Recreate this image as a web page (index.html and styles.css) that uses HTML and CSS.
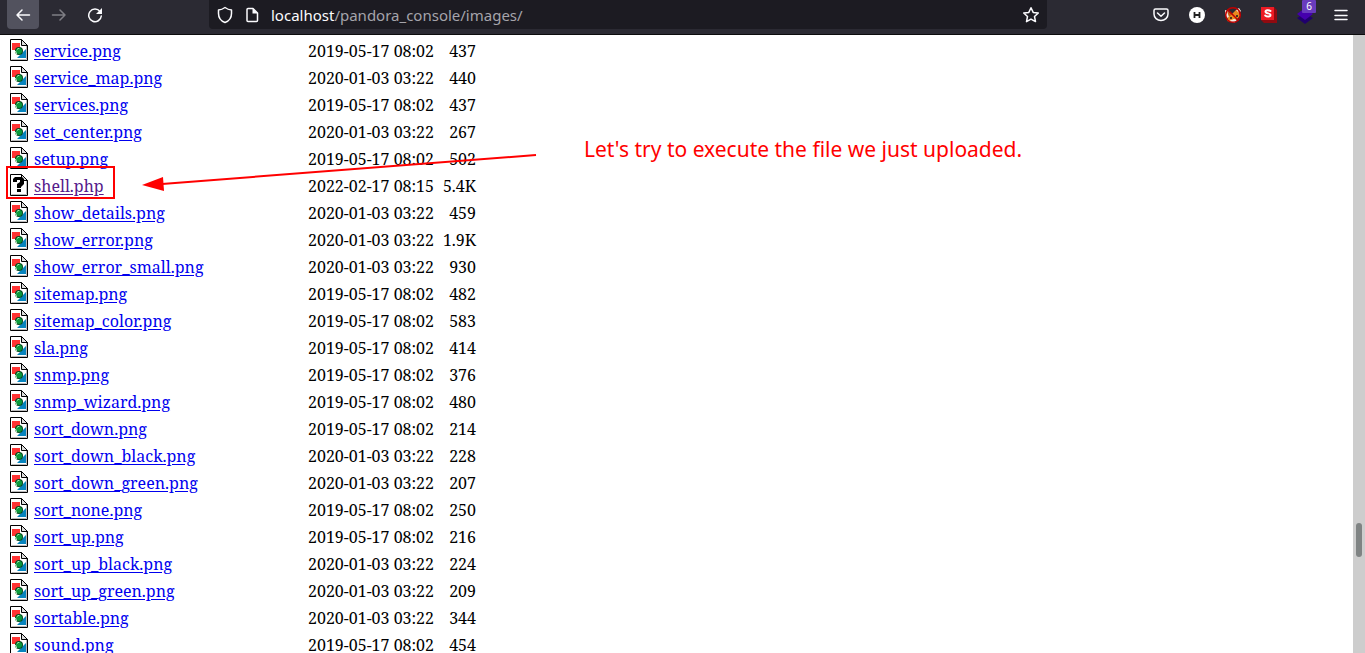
FILE: index.html
```
<!DOCTYPE html>
<html lang="en">
<head>
<meta charset="utf-8">
<title>Index of /pandora_console/images</title>
<link rel="stylesheet" href="styles.css">
</head>
<body>
<svg class="sprite" aria-hidden="true">
  <symbol id="image" viewBox="0 0 18 22">
    <path d="M.5.5h11l6 6v15H.5z" fill="#fff" stroke="#000"/>
    <path d="M1.500 20.500h15V7" fill="none" stroke="#bbb"/>
    <path d="M11.500.5v6h6z" fill="#ddd" stroke="#000"/>
    <path d="M2 4h8v7H2z" fill="#f33"/>
    <path d="M16 10v9H7z" fill="#0784bd"/>
    <circle cx="9" cy="12" r="4" fill="#05471c"/>
    <circle cx="9" cy="12" r="3" fill="#0a9a3c"/>
    <path d="M5 12h1l2-3h2L8 10l-2 2 1 3H6z" fill="#dfd"/>
  </symbol>
  <symbol id="unknown" viewBox="0 0 18 22">
    <path d="M.5.5h11l6 6v15H.5z" fill="#fff" stroke="#000"/>
    <path d="M1.500 20.500h15V7" fill="none" stroke="#bbb"/>
    <path d="M11.500.5v6h6z" fill="#ddd" stroke="#000"/>
    <path d="M3 8V5l2-2h7l2 2v5l-3 3v1H7v-4l3-2V6H7v2zM7 15h4v3H7z" fill="#000"/>
  </symbol>
</svg>
<header class="toolbar">
  <nav class="nav">
    <button class="tool active" aria-label="Back"><svg width="16" height="16" viewBox="0 0 16 16"><path d="M14.500 8H2M7 3L2 8l5 5"/></svg></button>
    <button class="tool dim" aria-label="Forward"><svg width="16" height="16" viewBox="0 0 16 16"><path d="M1.500 8H14M9 3l5 5-5 5"/></svg></button>
    <button class="tool" aria-label="Reload"><svg width="16" height="16" viewBox="0 0 16 16"><path d="M13 4.500A6.300 6.300 0 1 0 14.300 9"/><path d="M15 1v6H9z" fill="#fbfbfe" stroke="none"/></svg></button>
  </nav>
  <div class="address">
    <svg width="16" height="18" viewBox="0 0 16 18"><path d="M8 1.500c2 1.500 4 2.300 6.500 2.500v3.500c0 4-2.500 7.500-6.500 9-4-1.500-6.500-5-6.500-9V4C4 3.800 6 3 8 1.500z"/></svg>
    <svg width="16" height="16" viewBox="0 0 16 16"><path d="M4 1.500h5L13.500 6v7.500a1 1 0 0 1-1 1H4a1 1 0 0 1-1-1v-11a1 1 0 0 1 1-1z"/><path d="M8.500 1v5.500H14z" fill="#fbfbfe" stroke="none"/></svg>
    <div class="url"><span class="host">localhost</span>/pandora_console/images/</div>
    <button class="star" aria-label="Bookmark"><svg width="18" height="18" viewBox="0 0 18 18"><path d="M9 1.700l2.200 4.700 5.100.6-3.800 3.500 1 5.100L9 13.100l-4.500 2.500 1-5.100L1.700 7l5.100-.6z"/></svg></button>
  </div>
  <div class="extensions">
    <button class="ext" aria-label="Pocket"><svg width="18" height="18" viewBox="0 0 18 18"><path d="M3.500 3h11A1.500 1.500 0 0 1 16 4.500V8a7 6.500 0 0 1-14 0V4.500A1.500 1.500 0 0 1 3.500 3zM5.500 7L9 10.200 12.500 7"/></svg></button>
    <button class="ext" aria-label="H extension"><svg width="18" height="18" viewBox="0 0 18 18"><circle cx="9" cy="9" r="8" fill="#fff" stroke="none"/><path d="M6.500 6v6M11.500 6v6M6.500 9h5" stroke="#222" stroke-width="1.800" stroke-linecap="butt"/></svg></button>
    <button class="ext" aria-label="Proxy"><svg width="18" height="18" viewBox="0 0 18 18"><g stroke="none"><path d="M4 10l4-2 4-4 3 1 1 5-3 3-5 3-5-1z" fill="#ea8a1f"/><path d="M1 4l3 1 2 5-3 2-2-3zM12 4l3-2 2 3-2 2zM5 15l5-2 3 1-3 3z" fill="#f5ece2"/><path d="M3 5l5 3-3 3zM14 6l2-2v4z" fill="#c45a10"/><path d="M6 11h2v2H6zM12 9h2v2h-2z" fill="#432"/></g><circle cx="9" cy="9" r="7.300" stroke="#c00000"/><path d="M4 4l10 10" stroke="#c00000"/></svg></button>
    <button class="ext" aria-label="S extension"><svg width="18" height="18" viewBox="0 0 18 18"><g stroke="none"><path d="M1 14l3 3h13V4l-3-3v13z" fill="#900a10"/><path d="M1 1h13v13H1z" fill="#ed1b24"/></g><path d="M10.500 5c-1.500-1.200-5-1.200-5 .5 0 2.500 5 1.300 5 3.500 0 2-3.500 2-5.300.5" stroke="#fff" stroke-width="2"/></svg></button>
    <button class="ext" aria-label="Layers, 6"><svg width="18" height="18" viewBox="0 0 18 18"><g stroke="none"><path d="M1 12l8-5 8 5-8 6z" fill="#20006d"/><path d="M1 8l8-6 8 6-8 6z" fill="#4500ad"/></g></svg><span class="badge">6</span></button>
    <button class="ext" aria-label="Menu"><svg width="18" height="18" viewBox="0 0 18 18"><path d="M3 4.500h12M3 9.500h12M3 13.500h12"/></svg></button>
  </div>
</header>
<main class="page">
  <div class="listing">
    <table class="files">
      <tbody>
        <tr><td class="icon"><svg><use href="#image"/></svg></td><td class="name"><a href="#">service.png</a></td><td class="date">2019-05-17 08:02</td><td class="size">437</td></tr>
        <tr><td class="icon"><svg><use href="#image"/></svg></td><td class="name"><a href="#">service_map.png</a></td><td class="date">2020-01-03 03:22</td><td class="size">440</td></tr>
        <tr><td class="icon"><svg><use href="#image"/></svg></td><td class="name"><a href="#">services.png</a></td><td class="date">2019-05-17 08:02</td><td class="size">437</td></tr>
        <tr><td class="icon"><svg><use href="#image"/></svg></td><td class="name"><a href="#">set_center.png</a></td><td class="date">2020-01-03 03:22</td><td class="size">267</td></tr>
        <tr><td class="icon"><svg><use href="#image"/></svg></td><td class="name"><a href="#">setup.png</a></td><td class="date">2019-05-17 08:02</td><td class="size">502</td></tr>
        <tr><td class="icon"><svg><use href="#unknown"/></svg></td><td class="name"><a class="visited" href="#">shell.php</a></td><td class="date">2022-02-17 08:15</td><td class="size">5.4K</td></tr>
        <tr><td class="icon"><svg><use href="#image"/></svg></td><td class="name"><a href="#">show_details.png</a></td><td class="date">2020-01-03 03:22</td><td class="size">459</td></tr>
        <tr><td class="icon"><svg><use href="#image"/></svg></td><td class="name"><a href="#">show_error.png</a></td><td class="date">2020-01-03 03:22</td><td class="size">1.9K</td></tr>
        <tr><td class="icon"><svg><use href="#image"/></svg></td><td class="name"><a href="#">show_error_small.png</a></td><td class="date">2020-01-03 03:22</td><td class="size">930</td></tr>
        <tr><td class="icon"><svg><use href="#image"/></svg></td><td class="name"><a href="#">sitemap.png</a></td><td class="date">2019-05-17 08:02</td><td class="size">482</td></tr>
        <tr><td class="icon"><svg><use href="#image"/></svg></td><td class="name"><a href="#">sitemap_color.png</a></td><td class="date">2019-05-17 08:02</td><td class="size">583</td></tr>
        <tr><td class="icon"><svg><use href="#image"/></svg></td><td class="name"><a href="#">sla.png</a></td><td class="date">2019-05-17 08:02</td><td class="size">414</td></tr>
        <tr><td class="icon"><svg><use href="#image"/></svg></td><td class="name"><a href="#">snmp.png</a></td><td class="date">2019-05-17 08:02</td><td class="size">376</td></tr>
        <tr><td class="icon"><svg><use href="#image"/></svg></td><td class="name"><a href="#">snmp_wizard.png</a></td><td class="date">2019-05-17 08:02</td><td class="size">480</td></tr>
        <tr><td class="icon"><svg><use href="#image"/></svg></td><td class="name"><a href="#">sort_down.png</a></td><td class="date">2019-05-17 08:02</td><td class="size">214</td></tr>
        <tr><td class="icon"><svg><use href="#image"/></svg></td><td class="name"><a href="#">sort_down_black.png</a></td><td class="date">2020-01-03 03:22</td><td class="size">228</td></tr>
        <tr><td class="icon"><svg><use href="#image"/></svg></td><td class="name"><a href="#">sort_down_green.png</a></td><td class="date">2020-01-03 03:22</td><td class="size">207</td></tr>
        <tr><td class="icon"><svg><use href="#image"/></svg></td><td class="name"><a href="#">sort_none.png</a></td><td class="date">2019-05-17 08:02</td><td class="size">250</td></tr>
        <tr><td class="icon"><svg><use href="#image"/></svg></td><td class="name"><a href="#">sort_up.png</a></td><td class="date">2019-05-17 08:02</td><td class="size">216</td></tr>
        <tr><td class="icon"><svg><use href="#image"/></svg></td><td class="name"><a href="#">sort_up_black.png</a></td><td class="date">2020-01-03 03:22</td><td class="size">224</td></tr>
        <tr><td class="icon"><svg><use href="#image"/></svg></td><td class="name"><a href="#">sort_up_green.png</a></td><td class="date">2020-01-03 03:22</td><td class="size">209</td></tr>
        <tr><td class="icon"><svg><use href="#image"/></svg></td><td class="name"><a href="#">sortable.png</a></td><td class="date">2020-01-03 03:22</td><td class="size">344</td></tr>
        <tr><td class="icon"><svg><use href="#image"/></svg></td><td class="name"><a href="#">sound.png</a></td><td class="date">2019-05-17 08:02</td><td class="size">454</td></tr>
      </tbody>
    </table>
    <div class="highlight"></div>
    <svg class="arrow" width="396" height="40" viewBox="0 0 396 40"><path d="M394 4L20 33" stroke="#f00" stroke-width="2"/><path d="M0 34l21-8 1 14z" fill="#f00"/></svg>
    <p class="note">Let's try to execute the file we just uploaded.</p>
  </div>
  <div class="scrollbar"><div class="thumb"></div></div>
</main>
</body>
</html>
```
FILE: styles.css
```
* { box-sizing: border-box; }

body {
  margin: 0;
  height: 100vh;
  display: flex;
  flex-direction: column;
  overflow: hidden;
  background: #fff;
  color: #000;
  font: 16px/22px "Noto Serif", "Liberation Serif", serif;
}

.sprite { position: absolute; width: 0; height: 0; }

.toolbar {
  display: flex;
  flex: none;
  height: 35px;
  padding: 0 15px 5px 7px;
  background: #2b2a33;
  border-bottom: 1px solid #0c0c0d;
  font: 15px/20px "Noto Sans", sans-serif;
  color: #fbfbfe;
}

.toolbar button {
  position: relative;
  display: flex;
  align-items: center;
  justify-content: center;
  padding: 0;
  border: 0;
  background: none;
}

.toolbar svg {
  flex: none;
  fill: none;
  stroke: #fbfbfe;
  stroke-width: 1.5;
  stroke-linecap: round;
  stroke-linejoin: round;
}

.nav { display: flex; flex: 0 0 202px; gap: 4px; }
.toolbar .tool { width: 32px; border-radius: 0 0 4px 4px; }
.toolbar .active { background: #52525e; }
.dim svg { opacity: .4; }

.address {
  display: flex;
  flex: 1;
  align-items: center;
  gap: 11px;
  padding: 0 7px 0 8px;
  background: #1c1b22;
  border-radius: 0 0 4px 4px;
}
.url { flex: 1; color: #a5a4ab; font-size: 15px; }
.host { color: #fbfbfe; }

.extensions { display: flex; gap: 18px; padding-left: 105px; }
.toolbar .ext { width: 18px; }
.badge {
  position: absolute;
  top: 0;
  left: 6px;
  width: 14px;
  height: 13px;
  border-radius: 1px;
  background: #693bbd;
  color: #fff;
  font: 10px/13px "Noto Sans", sans-serif;
  text-align: center;
}

.page { display: flex; flex: 1; min-height: 0; }
.listing { position: relative; flex: 1; overflow: hidden; padding: 3px 0 0 8px; }

.files { border-collapse: collapse; }
.files td { height: 27px; padding: 0; vertical-align: top; white-space: nowrap; }
.files .icon { width: 26px; padding: 1px 2px 0; }
.icon svg { display: block; width: 18px; height: 22px; }
.files .name { width: 273px; padding-top: 2px; }
.files .date { width: 127px; padding-top: 2px; text-align: right; }
.files .size { width: 42px; padding-top: 2px; text-align: right; }
.name a { color: #00e; text-decoration: underline; text-underline-offset: 2px; }
.name .visited { color: #551a8b; }

/* Annotations over the listing */
.highlight {
  position: absolute;
  top: 131px;
  left: 6px;
  width: 109px;
  height: 33px;
  border: 2px solid #f00;
}
.arrow { position: absolute; top: 116px; left: 142px; }
.note {
  position: absolute;
  top: 99px;
  left: 584px;
  margin: 0;
  color: #f00;
  font: 21px/30px "Noto Sans", sans-serif;
  white-space: nowrap;
}

.scrollbar { flex: 0 0 12px; padding: 488px 3px 0; background: #cdcdcd; }
.thumb { height: 34px; border-radius: 3px; background: #7f8383; }
```
